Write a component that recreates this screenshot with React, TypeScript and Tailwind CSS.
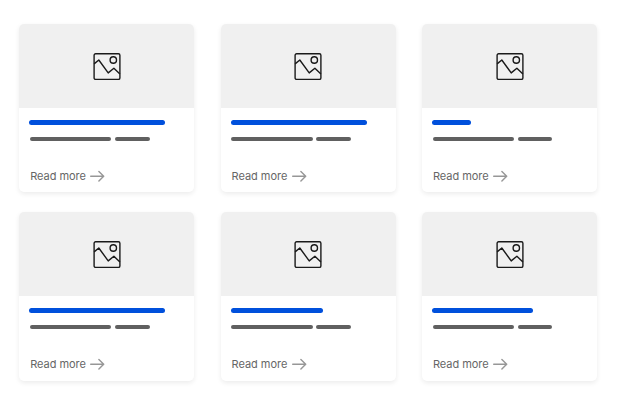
const titleWidths = ["w-[136px]", "w-[136px]", "w-[39.5px]", "w-[136px]", "w-[92px]", "w-[101px]"];

function PictureIcon() {
  return (
    <svg className="mt-[1.4px] ml-[0.7px]" width="28" height="28" viewBox="0 0 28 28" fill="none" stroke="#1a1a1a" strokeWidth="1.4" strokeLinejoin="round">
      <rect x="1.1" y="0.8" width="25.8" height="25.6" rx="1.5" />
      <circle cx="20.3" cy="7" r="3.2" />
      <path d="M1.1 10.9 5.8 7 15.2 19.9 20.9 15.3 26.9 21.1" />
    </svg>
  );
}

function Card({ titleWidth }: { titleWidth: string }) {
  return (
    <article className="flex h-[168.2px] w-[175px] flex-col overflow-hidden rounded-[5px] bg-white shadow-[0_2px_5px_rgba(0,0,0,0.08)]">
      <div className="flex h-[83.5px] shrink-0 items-center justify-center bg-[#f0f0f0]">
        <PictureIcon />
      </div>
      <div className="flex grow flex-col pl-[10px]">
        <div className={`mt-[12.6px] h-[5px] rounded-full bg-[#0050dc] ${titleWidth}`} />
        <div className="mt-[11.4px] ml-[0.6px] flex gap-[3.6px]">
          <div className="h-1 w-[81.6px] rounded-full bg-[#606060]" />
          <div className="h-1 w-[34.6px] rounded-full bg-[#606060]" />
        </div>
        <a className="mt-[27.5px] ml-[1px] flex items-center gap-[4.6px] text-[#666666]">
          <span className="font-['Inter','Liberation_Sans',sans-serif] text-[11px] leading-4 tracking-[-0.04px] whitespace-nowrap">Read more</span>
          <svg width="15" height="12" viewBox="0 0 15 12" fill="none" stroke="#979797" strokeWidth="1.4" strokeLinecap="round" strokeLinejoin="round">
            <path d="M0.7 6.3H13.6M8.9 1.5 13.7 6.3 8.9 11.1" />
          </svg>
        </a>
      </div>
    </article>
  );
}

export default function App() {
  return (
    <main className="h-[401px] w-[624px] overflow-hidden bg-white pt-[24.2px] pl-[19.2px]">
      <div className="grid w-max grid-cols-3 gap-x-[26.4px] gap-y-5">
        {titleWidths.map((width, i) => (
          <Card key={i} titleWidth={width} />
        ))}
      </div>
    </main>
  );
}
